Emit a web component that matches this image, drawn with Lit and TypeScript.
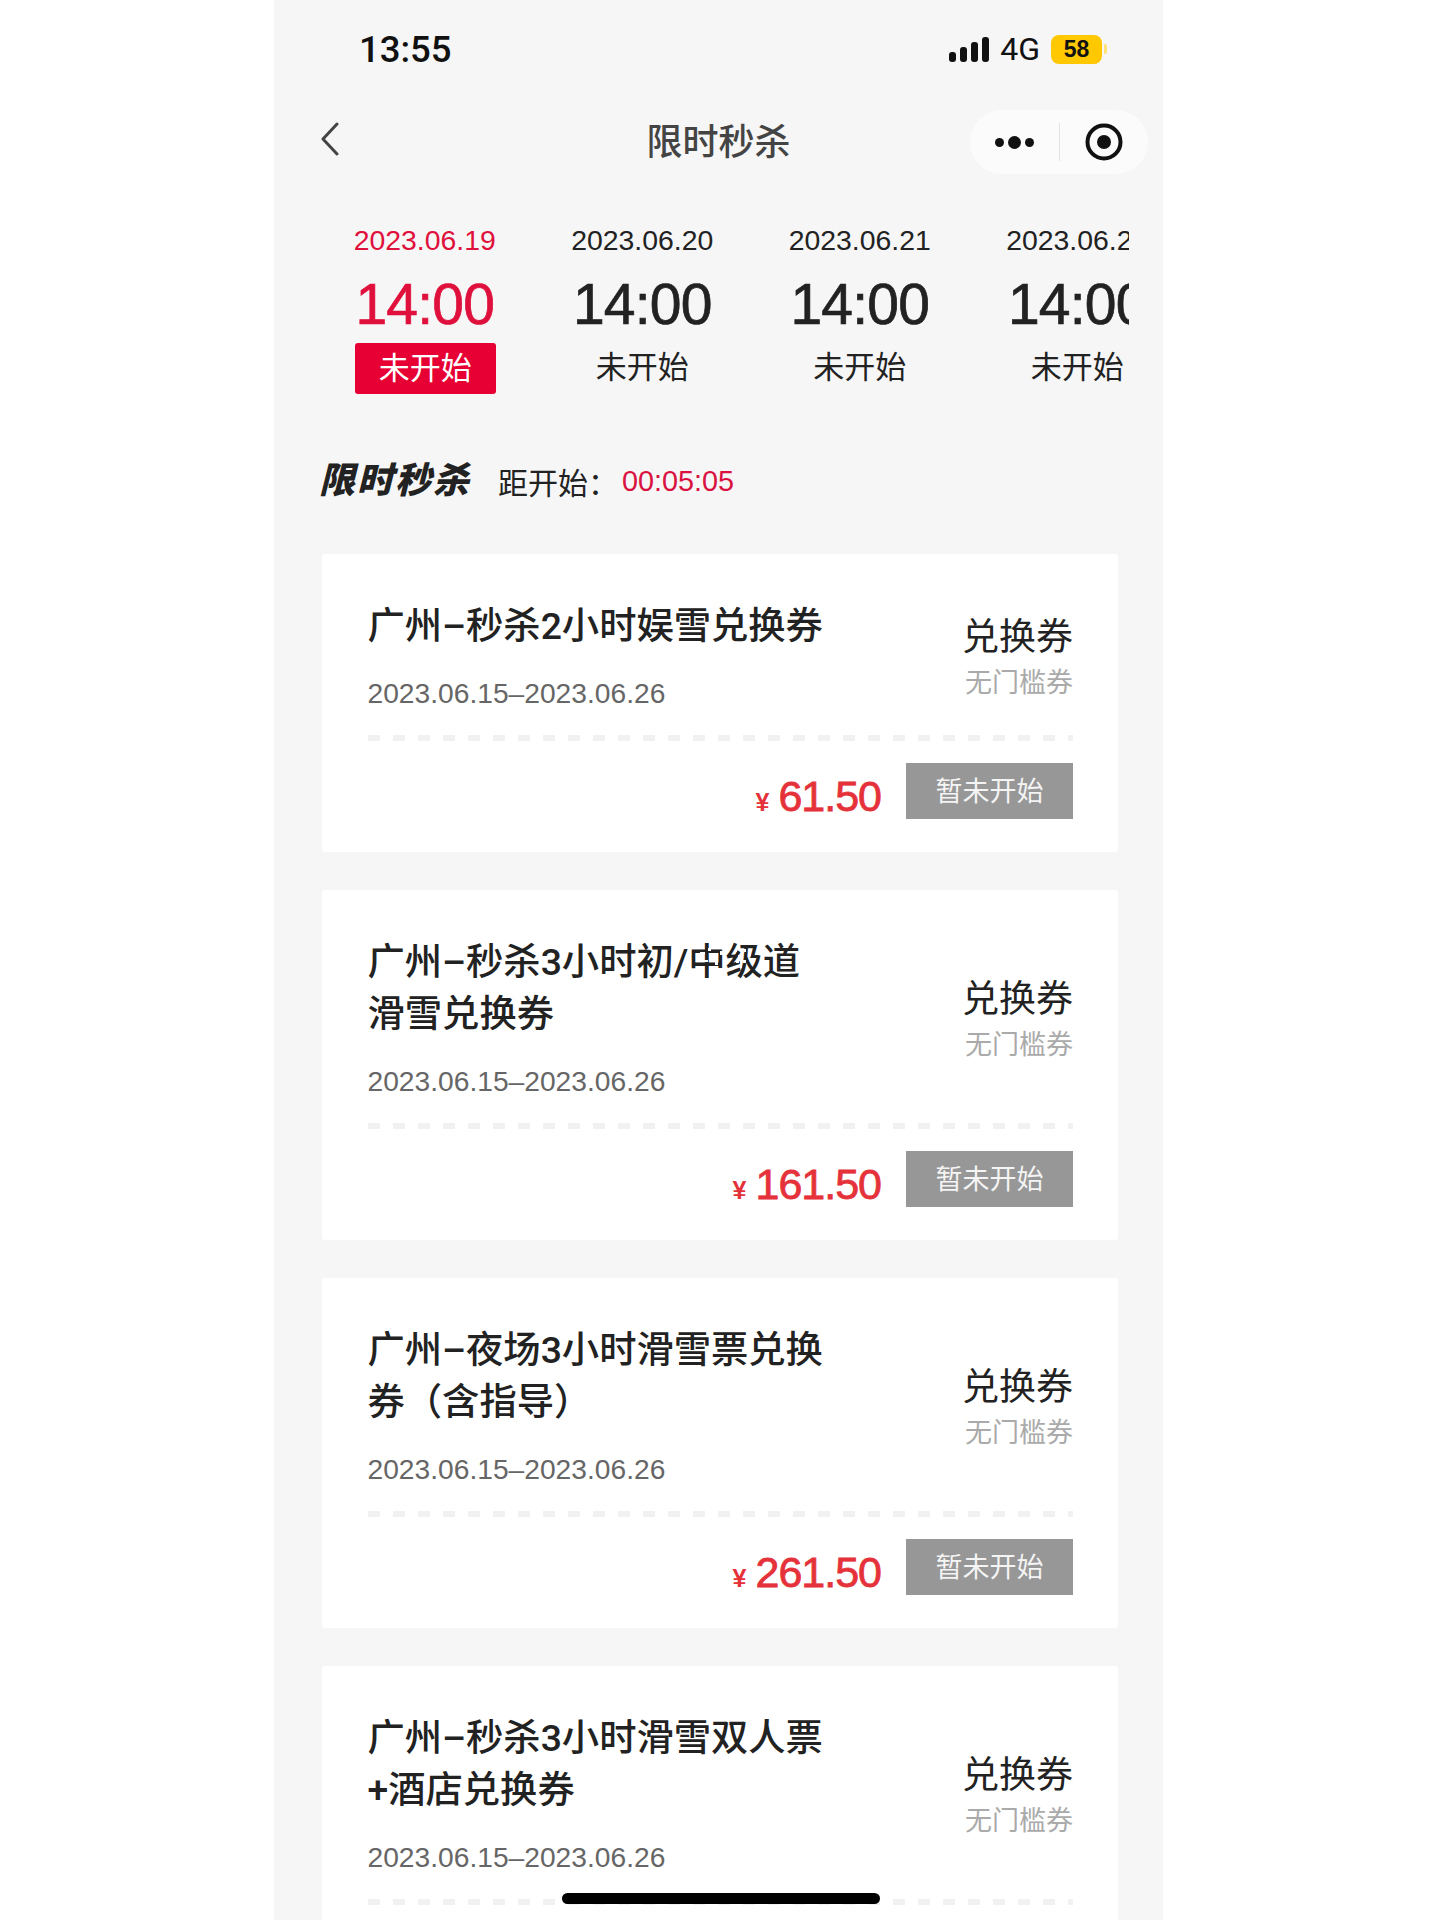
import { LitElement, html, css, svg } from "lit";
import { customElement } from "lit/decorators.js";

const sessions = [
  { date: "2023.06.19", active: true },
  { date: "2023.06.20", active: false },
  { date: "2023.06.21", active: false },
  { date: "2023.06.22", active: false },
];

const cards = [
  { title: "广州–秒杀2小时娱雪兑换券", price: "61.50" },
  { title: "广州–秒杀3小时初/中级道滑雪兑换券", price: "161.50" },
  { title: "广州–夜场3小时滑雪票兑换券（含指导）", price: "261.50" },
  { title: "广州–秒杀3小时滑雪双人票+酒店兑换券", price: "61.50" },
];

const specks: [number, number, number, number][] = [
  [0, 4, 5, 2], [8, 0, 3, 3], [12, 7, 6, 2], [20, 3, 3, 4], [4, 12, 4, 2],
  [15, 14, 3, 3], [24, 9, 2, 3], [34, 2, 3, 2], [38, 7, 4, 2], [44, 1, 2, 3],
  [36, 13, 3, 2], [43, 12, 3, 3], [48, 6, 3, 2], [40, 18, 2, 2],
];

@customElement("app-root")
export class AppRoot extends LitElement {
  static styles = css`
    :host {
      display: block;
      width: 1440px;
      height: 1920px;
      background: #fff;
      overflow: hidden;
      font-family: "Liberation Sans", "Noto Sans CJK SC", sans-serif;
    }
    * { box-sizing: border-box; }
    .screen {
      position: relative;
      width: 889px;
      height: 1920px;
      margin-left: 274px;
      background: #f6f6f6;
      overflow: hidden;
    }
    .status {
      display: flex;
      align-items: center;
      height: 98px;
      padding: 0 56px 0 85px;
      color: #111;
    }
    .clock {
      font-family: Roboto, "Liberation Sans", sans-serif;
      font-weight: 500;
      font-size: 36.5px;
      flex: 1;
    }
    .signal { display: flex; align-items: flex-end; gap: 4px; height: 25px; margin-right: 11px; }
    .signal i { display: block; width: 7px; background: #111; border-radius: 3px; }
    .net { font-family: Roboto, sans-serif; font-size: 32px; margin-right: 11px; }
    .battery {
      width: 51px;
      height: 29px;
      border-radius: 8px;
      background: #ffc800;
      display: flex;
      align-items: center;
      justify-content: center;
      font-weight: 700;
      font-size: 23px;
    }
    .nub { width: 3px; height: 10px; margin-left: 2px; background: #ffe27a; border-radius: 0 2px 2px 0; }

    .nav {
      display: flex;
      align-items: center;
      justify-content: space-between;
      height: 64px;
      margin-top: 12px;
      padding: 0 15px 0 46px;
    }
    .back { display: block; width: 20px; height: 34px; margin-top: -6px; }
    .nav-title {
      position: absolute;
      left: 0;
      right: 0;
      top: 117px;
      text-align: center;
      font-size: 36px;
      line-height: 52px;
      font-weight: 500;
      color: #444;
    }
    .capsule {
      width: 178px;
      height: 64px;
      border-radius: 32px;
      background: #fbfbfb;
      display: flex;
      align-items: center;
    }
    .dots { display: flex; align-items: center; justify-content: center; gap: 4px; width: 89px; }
    .dots i { display: block; width: 9px; height: 9px; border-radius: 50%; background: #111; }
    .dots i.big { width: 13px; height: 13px; }
    .sep { width: 1px; height: 38px; background: #e4e4e4; }
    .target { display: block; width: 40px; height: 40px; margin-left: 24px; }

    .sessions {
      display: flex;
      margin: 46px 34px 0 42px;
      overflow: hidden;
      height: 174px;
    }
    .session {
      flex: 0 0 217.5px;
      display: flex;
      flex-direction: column;
      align-items: center;
      color: #222;
    }
    .s-date { font-size: 28.4px; line-height: 40px; }
    .s-time {
      font-size: 57px;
      line-height: 64px;
      margin-top: 12px;
      letter-spacing: -0.8px;
      -webkit-text-stroke: 0.7px currentColor;
    }
    .s-state {
      width: 141px;
      height: 51px;
      margin-top: 7px;
      padding-bottom: 9px;
      border-radius: 3px;
      display: flex;
      align-items: center;
      justify-content: center;
      font-size: 31px;
    }
    .session.on { color: #e0103c; }
    .session.on .s-state { background: #e60033; color: #fff; padding-bottom: 7px; margin-left: 1px; }

    .count {
      display: flex;
      align-items: center;
      height: 40px;
      margin: 67px 0 0 48px;
    }
    .logo {
      display: inline-block;
      width: 152px;
      font-size: 36px;
      line-height: 40px;
      font-weight: 900;
      letter-spacing: 2px;
      white-space: nowrap;
      color: #222;
      transform: skewX(-14deg);
    }
    .count-label { margin-left: 24px; font-size: 30px; color: #222; width: 124px; white-space: nowrap; }
    .count-time { font-size: 28.8px; color: #d9123f; }

    .list {
      display: flex;
      flex-direction: column;
      gap: 38px;
      margin: 53px 45px 0 48px;
    }
    .card {
      flex: none;
      background: #fff;
      border-radius: 3px;
      padding: 46px 45px 33px 45.5px;
    }
    .top { display: flex; justify-content: space-between; align-items: center; }
    .title {
      width: 460px;
      font-family: Roboto, "Noto Sans CJK SC", sans-serif;
      font-size: 37.3px;
      line-height: 52px;
      font-weight: 500;
      color: #222;
    }
    .range { margin-top: 26px; font-size: 28.2px; line-height: 30px; color: #666; white-space: nowrap; }
    .kind { text-align: right; margin-top: 8px; }
    .kind-name { font-size: 37px; line-height: 50px; color: #222; }
    .kind-sub { font-size: 27px; line-height: 40px; color: #aaa; }
    .dash {
      height: 6px;
      margin-top: 27px;
      background: repeating-linear-gradient(90deg, #f1f1f1 0 12px, transparent 12px 25px);
    }
    .bottom { display: flex; justify-content: flex-end; align-items: center; margin-top: 22px; height: 56px; }
    .price {
      color: #e5323a;
      font-size: 43px;
      line-height: 56px;
      height: 56px;
      padding-top: 5px;
      letter-spacing: -1px;
      margin-right: 25px;
      -webkit-text-stroke: 0.8px currentColor;
      display: flex;
      align-items: baseline;
    }
    .price small { font-size: 25px; margin-right: 10px; font-weight: 700; -webkit-text-stroke: 0; }
    .btn {
      width: 167px;
      height: 56px;
      padding-bottom: 3px;
      background: #979797;
      color: #f4f4f4;
      display: flex;
      align-items: center;
      justify-content: center;
      font-size: 27px;
    }
    .mark { position: absolute; left: 426px; top: 948px; width: 54px; height: 22px; }
    .home {
      position: absolute;
      left: 288px;
      top: 1893px;
      width: 318px;
      height: 11px;
      border-radius: 6px;
      background: #000;
    }
  `;

  render() {
    return html`
      <div class="screen">
        <div class="status">
          <span class="clock">13:55</span>
          <span class="signal">
            ${[10, 15, 20, 25].map((h) => html`<i style="height:${h}px"></i>`)}
          </span>
          <span class="net">4G</span>
          <span class="battery">58</span><span class="nub"></span>
        </div>
        <div class="nav">
          <svg class="back" viewBox="0 0 20 34" fill="none" stroke="#444" stroke-width="3" stroke-linecap="round" stroke-linejoin="round">
            <path d="M17 2 L3 17 L17 32"></path>
          </svg>
          <div class="capsule">
            <span class="dots"><i></i><i class="big"></i><i></i></span>
            <span class="sep"></span>
            <svg class="target" viewBox="0 0 40 40">
              ${svg`<circle cx="20" cy="20" r="16.5" fill="none" stroke="#111" stroke-width="4"></circle><circle cx="20" cy="20" r="7" fill="#111"></circle>`}
            </svg>
          </div>
        </div>
        <div class="nav-title">限时秒杀</div>
        <div class="sessions">
          ${sessions.map(
            (s) => html`
              <div class="session ${s.active ? "on" : ""}">
                <div class="s-date">${s.date}</div>
                <div class="s-time">14:00</div>
                <div class="s-state">未开始</div>
              </div>
            `
          )}
        </div>
        <div class="count">
          <span class="logo">限时秒杀</span>
          <span class="count-label">距开始：</span>
          <span class="count-time">00:05:05</span>
        </div>
        <div class="list">
          ${cards.map(
            (c) => html`
              <div class="card">
                <div class="top">
                  <div>
                    <div class="title">${c.title}</div>
                    <div class="range">2023.06.15–2023.06.26</div>
                  </div>
                  <div class="kind">
                    <div class="kind-name">兑换券</div>
                    <div class="kind-sub">无门槛券</div>
                  </div>
                </div>
                <div class="dash"></div>
                <div class="bottom">
                  <div class="price"><small>¥</small>${c.price}</div>
                  <div class="btn">暂未开始</div>
                </div>
              </div>
            `
          )}
        </div>
        <svg class="mark" viewBox="0 0 54 22">
          ${specks.map(([x, y, w, h]) => svg`<rect x=${x} y=${y} width=${w} height=${h} fill="#fff"></rect>`)}
        </svg>
        <div class="home"></div>
      </div>
    `;
  }
}
